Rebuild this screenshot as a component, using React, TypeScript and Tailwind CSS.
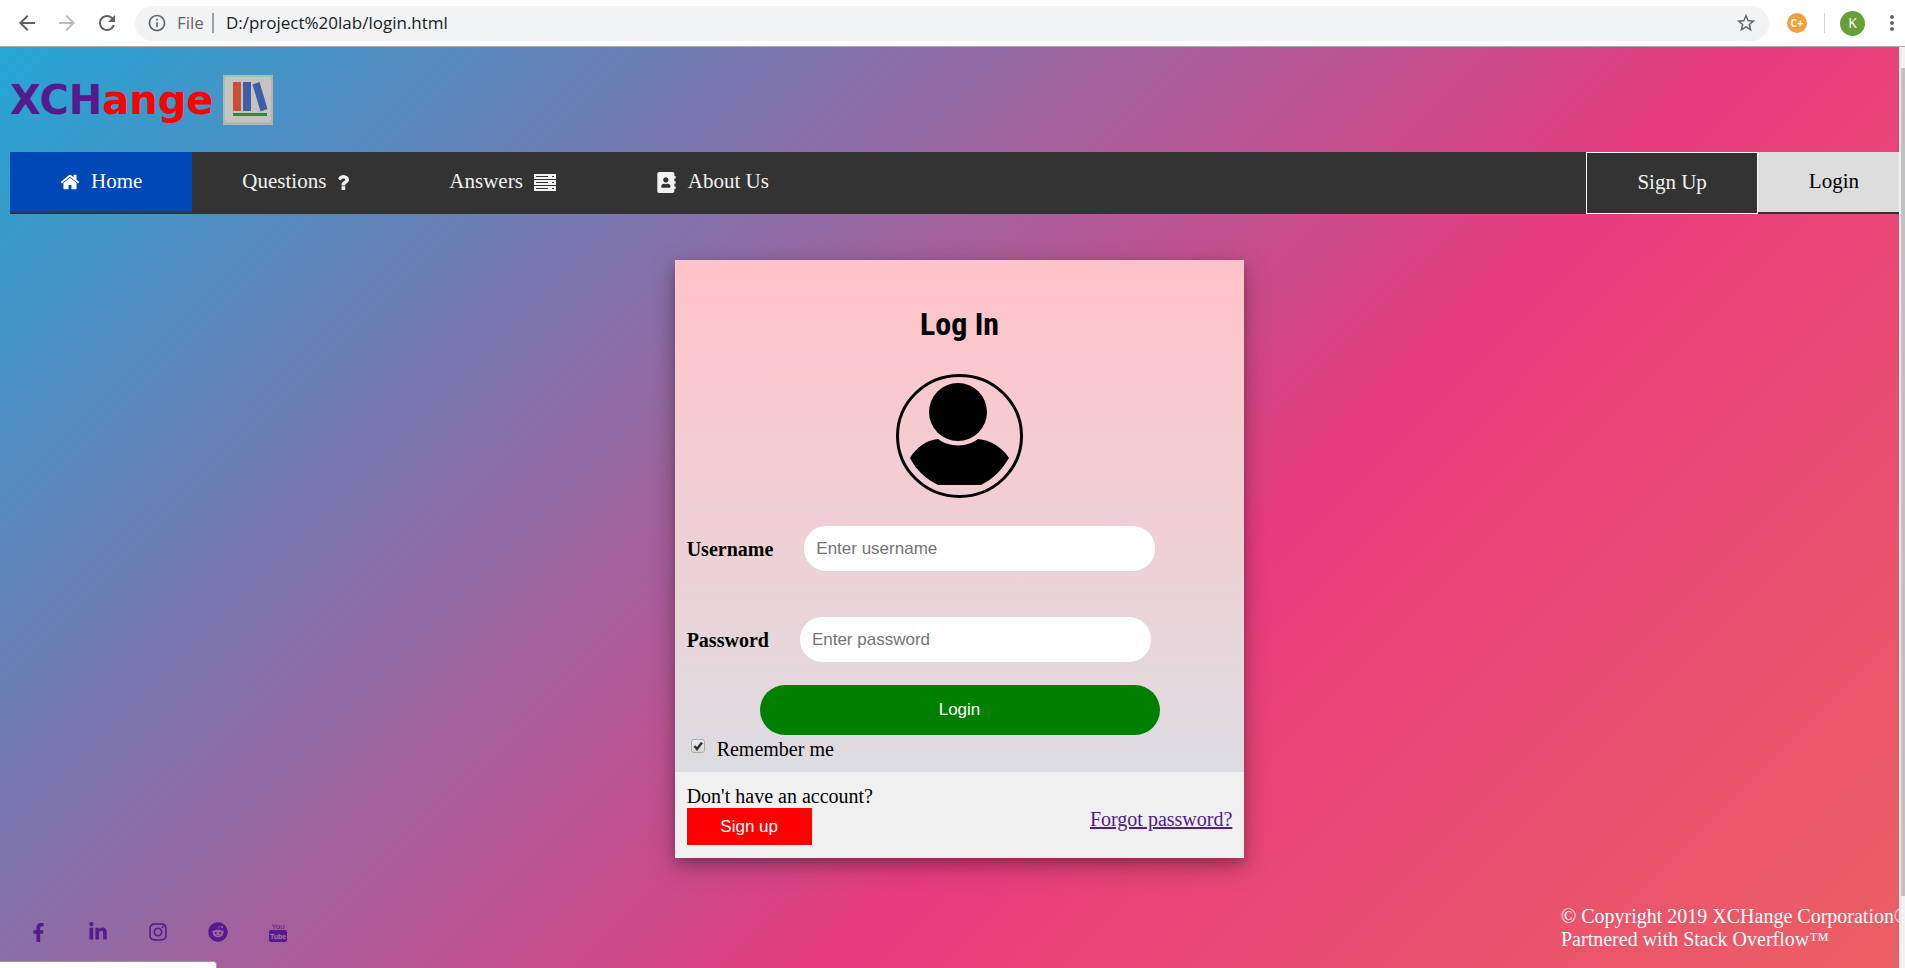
import type { ReactNode } from "react";
import { FaAddressBook, FaFacebookF, FaInstagram, FaLinkedinIn, FaReddit } from "react-icons/fa";
import { MdArrowBack, MdArrowForward, MdInfoOutline, MdMoreVert, MdRefresh, MdStarBorder } from "react-icons/md";

function HomeIcon() {
  return (
    <svg viewBox="64 192 1664 1408" className="h-4 w-5 shrink-0" fill="currentColor" aria-hidden="true">
      <path d="M1472 992v480q0 26-19 45t-45 19h-384v-384h-256v384h-384q-26 0-45-19t-19-45v-480q0-1 .5-3t.5-3l575-474 575 474q1 2 1 6zm223-69l-62 74q-8 9-21 11h-3q-13 0-21-7l-692-577-692 577q-12 8-24 7-13-2-21-11l-62-74q-8-10-7-23.5t11-21.5l719-599q32-26 76-26t76 26l244 204v-195q0-14 9-23t23-9h192q14 0 23 9t9 23v408l219 182q10 8 11 21.5t-7 23.5z" />
    </svg>
  );
}

function QuestionIcon() {
  return (
    <svg viewBox="380 256 1030 1280" className="h-[15px] w-3 shrink-0" fill="currentColor" aria-hidden="true">
      <path d="M1088 1256v240q0 16-12 28t-28 12h-240q-16 0-28-12t-12-28v-240q0-16 12-28t28-12h240q16 0 28 12t12 28zm316-600q0 54-15.5 101t-35 76.5-55 59.5-57.5 43.5-61 35.5q-41 23-68.5 65t-27.5 67q0 17-12 32.5t-28 15.5h-240q-15 0-25.5-18.5t-10.5-37.5v-45q0-83 65-156.5t143-108.5q59-27 84-56t25-76q0-42-46.5-74t-107.5-32q-65 0-108 29-35 25-107 115-13 16-31 16-12 0-25-8l-164-125q-13-10-15.5-25t5.5-28q160-266 464-266 80 0 161 31t146 83 106 127.5 41 158.5z" />
    </svg>
  );
}

function ServerIcon() {
  return (
    <svg viewBox="0 0 22 17" className="h-[17px] w-[22px] shrink-0" shapeRendering="crispEdges" aria-hidden="true">
      {[0, 6, 12].map((y) => (
        <g key={y}>
          <rect x="0" y={y} width="22" height="5" fill="#f2f2f2" />
          <rect x="2" y={y + 2} width="12" height="1" fill="#333" />
          <rect x="18" y={y + 2} width="2" height="1" fill="#333" />
        </g>
      ))}
    </svg>
  );
}

function BooksLogo() {
  return (
    <svg viewBox="0 0 50 50" className="size-[50px]" aria-hidden="true">
      <rect width="50" height="50" fill="#b3b5b1" />
      <rect x="2" y="2" width="46" height="45" rx="2" fill="#c3c4c0" />
      <rect x="10" y="7" width="8" height="29" fill="#cb4f35" />
      <rect x="20" y="7" width="8" height="29" fill="#415cab" />
      <path d="M29.500 9.500L36.500 7L44.500 34L37.500 36.500Z" fill="#415cab" />
      <rect x="10" y="38" width="34" height="3" fill="#2c8c3c" />
    </svg>
  );
}

function Avatar() {
  return (
    <svg viewBox="0 0 127 124" className="h-[124px] w-[127px]" role="img" aria-label="User">
      <ellipse cx="63.500" cy="62" rx="62" ry="60.500" fill="none" stroke="#000" strokeWidth="3" />
      <circle cx="62" cy="38" r="29" />
      <path d="M14 84C20 74 30 66 42 65C53 73.500 71 73.500 82 65C94 66 106 73 113 84C106 96 97 105 85 111H42C30 105 20 96 14 84Z" />
    </svg>
  );
}

function YouTubeIcon() {
  return (
    <svg viewBox="0 0 18 22" className="h-[22px] w-[18px] shrink-0" aria-hidden="true">
      <text x="9" y="8" textAnchor="middle" fontSize="8" fontFamily="Liberation Sans, sans-serif" fill="#551a8b">You</text>
      <rect x="0" y="9" width="18" height="12" rx="2" fill="#551a8b" />
      <text x="9" y="18" textAnchor="middle" fontSize="7" fontFamily="Liberation Sans, sans-serif" fontWeight="bold" fill="#b07ab0">Tube</text>
    </svg>
  );
}

function BrowserBar() {
  return (
    <header className="flex h-[47px] shrink-0 items-center border-b border-[#b2acb0] bg-white pl-[15px] font-['Open_Sans',sans-serif] text-[#5f6368]">
      <div className="flex items-center gap-4">
        <button aria-label="Back"><MdArrowBack size={24} /></button>
        <button aria-label="Forward" className="text-[#babcbe]"><MdArrowForward size={24} /></button>
        <button aria-label="Reload"><MdRefresh size={24} /></button>
      </div>
      <div className="ml-4 flex h-[35px] flex-1 items-center rounded-full bg-[#f1f3f4] pr-3 pl-3">
        <MdInfoOutline size={20} />
        <span className="ml-2.5 text-[17px]">File</span>
        <span className="mx-2 h-5 w-0.5 bg-[#9aa0a6]" />
        <input
          aria-label="Address"
          defaultValue="D:/project%20lab/login.html"
          className="min-w-0 flex-1 bg-transparent pl-1 text-[17px] text-[#202124] outline-none"
        />
        <button aria-label="Bookmark"><MdStarBorder size={22} /></button>
      </div>
      <button aria-label="Extension" className="ml-[18px] flex size-5 items-center justify-center rounded-full bg-[#f0a13c] text-[11px] font-bold text-white">
        C+
      </button>
      <span className="ml-[17px] h-5 w-px bg-[#d0d2d4]" />
      <button aria-label="Profile" className="ml-[15px] flex size-[25px] items-center justify-center rounded-full bg-[#689f38] text-sm text-white">
        K
      </button>
      <button aria-label="Menu" className="ml-[15px] w-[25px]"><MdMoreVert size={24} /></button>
    </header>
  );
}

function NavLink({ children, active = false }: { children: ReactNode; active?: boolean }) {
  return (
    <a
      href="#"
      className={
        active
          ? "flex h-[60px] items-center gap-[11px] bg-[#0047b8] px-[50px] text-white"
          : "flex h-[60px] items-center gap-[11px] px-[50px]"
      }
    >
      {children}
    </a>
  );
}

function Field({ id, label, type }: { id: string; label: string; type: string }) {
  return (
    <div className="flex items-center">
      <label htmlFor={id} className="font-bold">{label}</label>
      <input
        id={id}
        type={type}
        placeholder={"Enter " + label.toLowerCase()}
        className="ml-[31px] h-[45px] w-[351px] rounded-[22px] bg-white px-3 font-['Liberation_Sans',Arial,sans-serif] text-[17px] outline-none placeholder:text-[#757575]"
      />
    </div>
  );
}

function LoginCard() {
  return (
    <form className="mx-auto mt-[46px] w-[30%] min-w-[520px] shadow-[0_5px_10px_rgba(0,0,0,0.2),0_8px_25px_rgba(0,0,0,0.25)]">
      <div className="bg-linear-to-b from-[#ffc3c9] via-[#f0cfd4] to-[#dcdde2] px-3 pt-10 pb-0.5">
        <h1 className="text-center font-['Roboto_Condensed','Open_Sans_Condensed',Roboto,sans-serif] text-[32px] leading-12 font-bold">Log In</h1>
        <div className="mt-[26px] flex justify-center">
          <Avatar />
        </div>
        <div className="mt-7 flex flex-col gap-[46px]">
          <Field id="username" label="Username" type="text" />
          <Field id="password" label="Password" type="password" />
        </div>
        <button type="button" className="mx-auto mt-[23px] block h-[50px] w-[400px] rounded-full bg-[#008000] font-['Liberation_Sans',Arial,sans-serif] text-[17px] text-white">
          Login
        </button>
        <label className="flex h-[35px] items-start text-xl leading-7">
          <span className="relative mt-1 ml-1 flex">
            <input
              type="checkbox"
              defaultChecked
              className="peer size-3.5 appearance-none rounded-[3px] border border-[#a9a9a9] bg-linear-to-b from-[#eee] to-[#d8d8d8]"
            />
            <svg viewBox="0 0 14 14" className="pointer-events-none absolute inset-0 hidden peer-checked:block" aria-hidden="true">
              <path d="M3.500 7L6 10L11 3.500" fill="none" stroke="#333" strokeWidth="2.500" />
            </svg>
          </span>
          <span className="ml-3">Remember me</span>
        </label>
      </div>
      <div className="flex items-start justify-between bg-[#f0f0f0] px-3 pt-[13px] pb-[13px]">
        <div>
          <p className="leading-[23px]">Don't have an account?</p>
          <button type="button" className="block h-[37px] w-[125px] bg-[#ff0000] font-['Liberation_Sans',Arial,sans-serif] text-[17px] text-white">
            Sign up
          </button>
        </div>
        <a href="#" className="mt-[23px] leading-[23px] text-[#551a8b] underline">Forgot password?</a>
      </div>
    </form>
  );
}

export default function App() {
  return (
    <div className="relative flex min-h-screen flex-col overflow-hidden">
      <BrowserBar />
      <div className="flex flex-1">
        <div className="flex min-w-0 flex-1 flex-col overflow-hidden bg-[linear-gradient(135deg,#23a6d5_0%,#e73c7e_62%,#ee7752_124%)] pl-2.5 font-['Liberation_Serif','Times_New_Roman',serif] text-xl text-black">
          <a href="#" className="mt-7 flex h-[50px] w-max items-center gap-2.5">
            <span className="font-['DejaVu_Sans',sans-serif] text-[40px] leading-[50px] font-bold text-[#551a8b]">
              XCH<span className="text-[#ff0000]">ange</span>
            </span>
            <BooksLogo />
          </a>

          <nav className="mt-[27px] flex h-[62px] bg-[#333333] text-[21px] text-[#f2f2f2]">
            <NavLink active><HomeIcon />Home</NavLink>
            <NavLink>Questions<QuestionIcon /></NavLink>
            <NavLink>Answers<ServerIcon /></NavLink>
            <NavLink><FaAddressBook size={21} />About Us</NavLink>
            <a href="#" className="ml-auto flex items-center border border-white px-[50px]">Sign Up</a>
            <a href="#" className="flex h-[60px] items-center bg-[#dddddd] pr-10 pl-[51px] text-black">Login</a>
          </nav>

          <main className="-mr-2.5">
            <LoginCard />
          </main>

          <footer className="mt-auto flex items-start justify-between pb-[17px]">
            <div className="mt-4 ml-[18px] flex items-center gap-10 text-[#551a8b]">
              <a href="#" aria-label="Facebook" className="flex w-5 justify-center"><FaFacebookF size={19} /></a>
              <a href="#" aria-label="LinkedIn" className="flex w-5 justify-center"><FaLinkedinIn size={20} /></a>
              <a href="#" aria-label="Instagram" className="flex w-5 justify-center"><FaInstagram size={20} /></a>
              <a href="#" aria-label="Reddit" className="flex w-5 justify-center"><FaReddit size={20} /></a>
              <a href="#" aria-label="YouTube" className="flex w-5 justify-center"><YouTubeIcon /></a>
            </div>
            <p className="w-[338px] leading-[23px] whitespace-nowrap text-white">
              © Copyright 2019 XCHange Corporation®
              <br />
              Partnered with Stack Overflow™
            </p>
          </footer>
        </div>
        <div className="flex w-1.5 flex-col bg-[#f1f1f1] pt-[21px] pb-[72px] pl-0.5">
          <div className="flex-1 bg-[#c1c1c1]" />
        </div>
      </div>
      <div className="absolute bottom-0 left-0 h-[7px] w-[217px] rounded-tr border-t border-r border-[#a59ab0] bg-white" />
    </div>
  );
}
